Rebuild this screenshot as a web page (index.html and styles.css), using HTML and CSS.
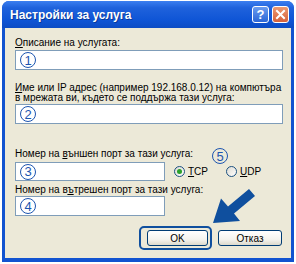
FILE: index.html
```html
<!DOCTYPE html>
<html>
<head>
    <title>Настройки за услуга</title>
    <meta charset="utf-8">
    <link rel="stylesheet" href="styles.css">
</head>
<body>
    <div class="window">
        <div class="titlebar">
            <span class="title">Настройки за услуга</span>
            <span class="tbtn help">?</span>
            <span class="tbtn close">
                <svg width="11" height="11" viewBox="0 0 11 11"><path d="M2 2 L9 9 M9 2 L2 9" stroke="#fff" stroke-width="2" stroke-linecap="square"/></svg>
            </span>
        </div>
        <div class="client">
            <div class="label"><u>О</u>писание на услугата:</div>
            <div class="edit"><span class="num">1</span></div>

            <div class="label two"><u>И</u>ме или IP адрес (например 192.168.0.12) на компютъра<br>в мрежата ви, където се поддържа тази услуга:</div>
            <div class="edit"><span class="num">2</span></div>

            <div class="label-row">
                <span class="label">Номер на <u>в</u>ъншен порт за тази услуга:</span>
                <span class="num five">5</span>
            </div>
            <div class="port-row">
                <div class="edit short"><span class="num">3</span></div>
                <span class="radio"><span class="dot checked"></span><u>T</u>CP</span>
                <span class="radio"><span class="dot"></span><u>U</u>DP</span>
            </div>

            <div class="label four">Номер на в<u>ъ</u>трешен порт за тази услуга:</div>
            <div class="edit short"><span class="num">4</span></div>

            <div class="buttons">
                <span class="focus"><span class="btn">OK</span></span>
                <span class="btn">Отказ</span>
            </div>
        </div>
        <!-- стрелка към бутона OK -->
        <svg class="arrow" width="70" height="60" viewBox="0 0 70 60">
            <polygon points="49,9 28,26.5 21,18.4 13,43 40,41 34,33.5 55,16" fill="#0f4f9e"/>
        </svg>
    </div>
</body>
</html>
```
FILE: styles.css
```css
body {
    margin: 0;
    background: #fff;
    font-family: "Liberation Sans", Arial, sans-serif;
}

.window {
    position: relative;
    width: 292px;
    margin: 1px 0 0 2px;
    background: #1153d0;
    border-radius: 7px 7px 0 0;
    padding-bottom: 4px;
}

.titlebar {
    height: 27px;
    display: flex;
    align-items: center;
    padding: 0 5px 0 8px;
    background: linear-gradient(#3c7ff0, #1f62dc 25%, #0f55d6 70%, #0c4cc4);
    border-radius: 7px 7px 0 0;
}

.title {
    flex: 1;
    color: #fff;
    font-size: 12px;
    font-weight: bold;
    text-shadow: 1px 1px 0 #0a3a9a;
}

.tbtn {
    width: 17px;
    height: 17px;
    box-sizing: border-box;
    border: 1px solid #fff;
    border-radius: 3px;
    display: flex;
    align-items: center;
    justify-content: center;
    color: #fff;
    font-size: 13px;
    font-weight: bold;
}

.help {
    background: linear-gradient(#6a9cf0, #2c66d6);
    margin-right: 3px;
}

.close {
    background: linear-gradient(#ec9a72, #d4603a);
}

.client {
    height: 230px;
    margin: 0 3px;
    padding: 9px 8px 0 10px;
    box-sizing: border-box;
    background: #ece9d8;
    font-size: 10px;
    color: #000;
}

.label {
    line-height: 12px;
}

.label.two {
    margin-top: 13px;
    line-height: 10px;
}

.edit {
    height: 20px;
    margin-top: 1px;
    padding-left: 4px;
    box-sizing: border-box;
    display: flex;
    align-items: center;
    background: #fff;
    border: 1px solid #7f9db9;
}

.edit.short {
    width: 150px;
}

.num {
    width: 16px;
    height: 16px;
    box-sizing: border-box;
    border: 1.6px solid #1d55b0;
    border-radius: 50%;
    display: flex;
    align-items: center;
    justify-content: center;
    color: #1d55b0;
    font-size: 13px;
    line-height: 1;
}

.label-row {
    height: 12px;
    margin-top: 24px;
    display: flex;
    align-items: flex-start;
}

.five {
    margin: 0 55px 0 auto;
}

.port-row {
    margin-top: 2px;
    display: flex;
    align-items: center;
}

.port-row .edit {
    margin-top: 0;
    height: 19px;
}

.radio {
    display: flex;
    align-items: center;
    margin-left: 9px;
}

.radio + .radio {
    margin-left: 18px;
}

.dot {
    width: 11px;
    height: 11px;
    box-sizing: border-box;
    margin-right: 3px;
    border: 1px solid #1c5180;
    border-radius: 50%;
    background: linear-gradient(135deg, #dcdad2, #fff);
    display: flex;
    align-items: center;
    justify-content: center;
}

.dot.checked::after {
    content: "";
    width: 5px;
    height: 5px;
    border-radius: 50%;
    background: #2aa12a;
}

.label.four {
    margin-top: 4px;
    line-height: 10px;
}

.buttons {
    margin-top: 10px;
    margin-right: 1px;
    display: flex;
    justify-content: flex-end;
    align-items: center;
}

.focus {
    padding: 2px 2px 2px 6px;
    border: 2px solid #0f4f9e;
    border-radius: 5px;
    margin-right: 6px;
}

.btn {
    display: flex;
    align-items: center;
    justify-content: center;
    width: 61px;
    height: 16px;
    box-sizing: border-box;
    border: 1px solid #003c74;
    border-radius: 3px;
    background: linear-gradient(#fff, #f4f3ee 60%, #dcd9cc);
    font-size: 10px;
}

.buttons > .btn {
    width: 64px;
}

.arrow {
    position: absolute;
    left: 198px;
    top: 179px;
}
```
